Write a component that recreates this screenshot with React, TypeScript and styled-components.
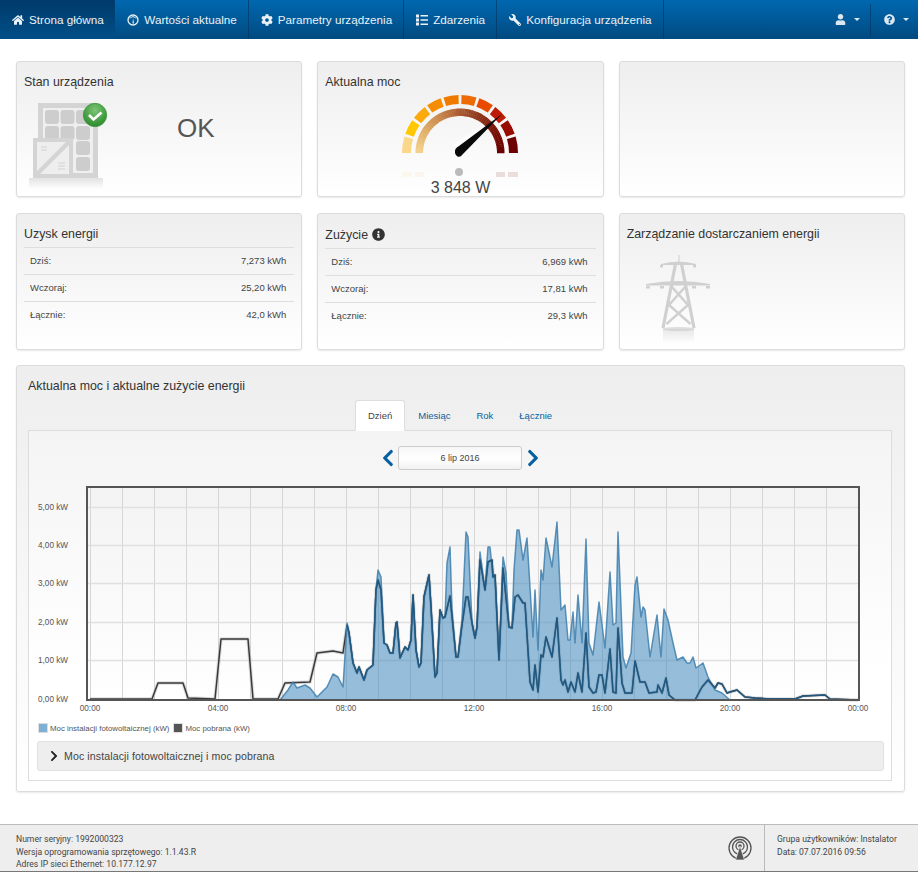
import React from 'react';
import styled, { createGlobalStyle } from 'styled-components';
import { FaHome, FaCog, FaWrench, FaUser, FaQuestionCircle, FaInfoCircle, FaChevronLeft, FaChevronRight } from 'react-icons/fa';

const Global = createGlobalStyle`
  html, body { margin: 0; padding: 0; background: #fff; }
  body { font-family: "Liberation Sans", Arial, sans-serif; color: #333; }
  * { box-sizing: border-box; }
`;
const Page = styled.div`width: 918px; height: 872px; display: flex; flex-direction: column; overflow: hidden;`;
const NavBar = styled.nav`
  height: 39px; display: flex; background: linear-gradient(#0068b0, #004a80);
`;
const NavItem = styled.div<{ $active?: boolean; $plain?: boolean }>`
  display: flex; align-items: center; gap: 5px; padding: ${p => (p.$active ? '0 11.6px 0 12px' : '0 11px 0 12px')}; color: #eaf2f8; font-size: 11.7px;
  background: ${p => (p.$active ? 'linear-gradient(#003a6a, #004f88)' : 'none')};
  border-right: ${p => (p.$active || p.$plain ? '0' : '1px solid rgba(0,45,85,.55)')};
  svg { font-size: 12px; flex: none; }
`;
const FlippedWrench = styled(FaWrench)`transform: scaleX(-1);`;
const NavRight = styled.div`margin-left: auto; display: flex; align-items: center;`;
const NavMenu = styled.div<{ $sep?: boolean }>`
  display: flex; align-items: center; gap: 8px; color: #dbe8f2; height: 32px; font-size: 11px;
  padding: ${p => (p.$sep ? '0 9px 0 13px' : '0 10px 0 0')};
  border-left: ${p => (p.$sep ? '1px solid rgba(0,45,85,.55)' : '0')};
`;
const Caret = styled.span`
  width: 0; height: 0; border-left: 3px solid transparent; border-right: 3px solid transparent; border-top: 3px solid #dbe8f2;
`;
const Main = styled.main`
  flex: 1; padding: 22px 13px 0 16px; display: grid; grid-template-columns: repeat(3, 1fr);
  grid-template-rows: 136px 153px 442px; column-gap: 15px; align-content: start;
`;
const Card = styled.section<{ $mt?: number }>`
  background: linear-gradient(#eeeeee, #ffffff);
  border: 1px solid #dcdcdc; border-radius: 3px; box-shadow: 0 1px 2px rgba(0,0,0,.09);
  margin-top: ${p => p.$mt ?? 0}px; padding: 12px 7px 0;
  overflow: hidden;
`;
const Title = styled.h3<{ $extra?: number }>`
  margin: 0; font-weight: normal; font-size: 12.4px; line-height: 16px; color: #333;
  display: flex; align-items: center; gap: 4px; height: ${p => 16 + (p.$extra ?? 0)}px;
  svg { font-size: 13px; color: #333; }
`;
const StatusBody = styled.div`display: flex; align-items: flex-start; margin-left: -7px;`;
const DeviceSvg = styled.svg`display: block; flex: none; margin-top: 5px;`;
const OkText = styled.div`font-size: 26px; line-height: 30px; color: #555; margin: 23px 0 0 60px;`;
const GaugeWrap = styled.div`display: flex; flex-direction: column; align-items: center;`;
const GaugeSvg = styled.svg`display: block; margin-top: 3px;`;
const GaugeValue = styled.div`font-size: 16px; line-height: 18px; color: #444; margin-top: 1px;`;
const Rows = styled.div<{ $mt: number }>`margin-top: ${p => p.$mt}px;`;
const Row = styled.div`
  height: 27px; border-top: 1px solid #dedede; display: flex; align-items: center; justify-content: space-between;
  padding: 0 8px 2px 6px; font-size: 9.5px; color: #444;
`;
const TowerSvg = styled.svg`display: block; margin: 13px 0 0 19px;`;
const Panel = styled(Card)`grid-column: 1 / span 3; margin-top: 15px; padding: 12px 12px 0 11px;`;
const PanelTitle = styled(Title)`margin-bottom: 6px;`;
const Tabs = styled.div`display: flex; justify-content: center; margin-bottom: -1px; position: relative; height: 31px;`;
const Tab = styled.div<{ $active?: boolean }>`
  padding: 0 12px; line-height: 30px; font-size: 9.5px;
  color: ${p => (p.$active ? '#444' : '#0a5f9c')};
  background: ${p => (p.$active ? '#fff' : 'transparent')};
  border: ${p => (p.$active ? '1px solid #ddd' : '1px solid transparent')};
  border-bottom-color: ${p => (p.$active ? '#fff' : 'transparent')};
  border-radius: 3px 3px 0 0;
`;
const TabBox = styled.div`
  height: 351px; background: linear-gradient(#f4f4f4, #fff 70%); border: 1px solid #dddddd; padding: 15px 7px 0 8px;
`;
const DateRow = styled.div`
  display: flex; justify-content: center; align-items: center; gap: 4px; height: 24px; color: #07609f;
  svg { display: block; width: 12px; height: 20px; }
`;
const DateBox = styled.div`
  width: 124px; height: 24px; margin-right: 1px; border: 1px solid #ccc; border-radius: 3px; background: linear-gradient(#f6f6f6, #fff 50%, #f2f2f2);
  font-size: 9px; line-height: 22px; color: #444; text-align: center;
`;
const ChartSvg = styled.svg`display: block; margin-top: 10px;`;
const Legend = styled.div`height: 14px; display: flex; align-items: center; gap: 2px; font-size: 7.85px; color: #555; padding-left: 1px; margin: 1px 0 6px;`;
const Swatch = styled.i<{ $c: string }>`width: 10px; height: 10px; background: ${p => p.$c}; border: 1px solid #ddd; display: block; margin-left: ${p => (p.$c === '#555' ? '2px' : 0)};`;
const Accordion = styled.div`
  height: 30px; background: #eeeeee; border: 1px solid #e0e0e0; border-radius: 3px; display: flex; align-items: center; gap: 6px; padding-left: 12px;
  font-size: 10.6px; letter-spacing: .1px; color: #444; svg { width: 8px; height: 12px; color: #222; }
`;
const Footer = styled.footer`
  height: 48px; background: #eeeeee; border-top: 1px solid #bbb; border-bottom: 1px solid #777; display: flex;
  font-family: Roboto, Tahoma, sans-serif; font-size: 8.6px; line-height: 12.5px; color: #444;
`;
const FooterLeft = styled.div`flex: 1; padding: 8px 0 0 16px;`;
const FooterIcon = styled.div`display: flex; align-items: center; padding-right: 12px;`;
const FooterRight = styled.div`width: 154px; border-left: 1px solid #bbb; padding: 8px 0 0 12px;`;

const pv: number[][] = [[90,700],[280,700],[288,690],[293,682],[297,688],[305,685],[310,688],[317,697],[327,687],[333,674],[338,677],[343,687],[347,623],[349,633],[353,663],[357,673],[359,667],[364,680],[367,670],[373,665],[376,590],[378,570],[381,577],[384,643],[387,645],[390,653],[393,653],[396,623],[397,622],[400,658],[405,647],[408,650],[411,640],[413,595],[416,650],[419,667],[421,663],[424,597],[429,575],[431,607],[435,677],[437,673],[440,610],[443,618],[445,617],[447,563],[450,547],[452,610],[456,657],[458,657],[462,620],[466,532],[468,537],[472,623],[475,638],[477,627],[480,552],[485,590],[488,547],[490,547],[493,577],[495,575],[499,660],[503,557],[506,573],[509,627],[512,628],[514,570],[517,530],[519,530],[523,560],[527,538],[533,637],[535,590],[538,650],[541,570],[543,580],[546,538],[552,567],[557,522],[561,610],[565,605],[568,640],[570,640],[573,612],[575,643],[578,595],[582,643],[586,539],[589,643],[593,655],[599,602],[605,648],[610,572],[613,625],[616,623],[618,532],[623,657],[626,668],[631,653],[635,585],[637,577],[641,617],[643,607],[645,610],[650,657],[657,615],[661,657],[664,609],[668,620],[673,643],[677,660],[683,657],[687,663],[690,663],[693,657],[696,668],[703,663],[708,677],[715,690],[722,693],[730,700],[858,700]];
const load: number[][] = [[90,699],[152,699],[158,683],[183,683],[188,698],[215,699],[221,639],[248,639],[253,699],[278,699],[285,683],[310,682],[317,653],[333,651],[343,653],[347,625],[349,633],[353,663],[357,673],[359,667],[364,680],[367,670],[373,665],[376,590],[378,580],[381,590],[384,643],[387,645],[390,653],[393,653],[396,623],[397,622],[400,658],[405,647],[408,650],[411,640],[413,595],[416,650],[419,667],[421,663],[424,597],[429,575],[431,607],[435,677],[437,673],[440,610],[443,618],[445,617],[450,596],[456,657],[458,657],[462,625],[466,597],[468,597],[472,623],[475,638],[477,627],[480,560],[485,590],[488,562],[492,560],[493,577],[495,575],[499,660],[503,568],[509,627],[512,628],[515,597],[518,595],[523,603],[525,603],[530,682],[533,690],[535,665],[538,692],[541,655],[543,657],[546,637],[552,657],[557,618],[561,680],[563,685],[565,680],[568,692],[571,682],[575,692],[578,673],[582,692],[586,633],[589,687],[593,693],[596,692],[599,675],[602,675],[605,693],[610,649],[613,692],[616,693],[618,628],[622,683],[625,693],[632,693],[635,661],[640,682],[645,682],[649,693],[657,692],[658,685],[662,693],[666,678],[669,695],[675,700],[695,700],[702,687],[708,680],[715,688],[718,683],[722,684],[727,693],[730,692],[737,690],[745,697],[755,698],[770,699],[795,699],[803,696],[825,695],[830,699],[858,700]];
const toLine = (p: number[][]) => p.map((q, i) => `${i ? 'L' : 'M'}${q[0]} ${q[1]}`).join(' ');

const polar = (r: number, deg: number) => {
  const a = (deg * Math.PI) / 180;
  return [65 - r * Math.cos(a), 60 - r * Math.sin(a)];
};
const arcSeg = (r0: number, r1: number, a0: number, a1: number) => {
  const [x0, y0] = polar(r1, a0); const [x1, y1] = polar(r1, a1); const [x2, y2] = polar(r0, a1); const [x3, y3] = polar(r0, a0);
  return `M${x0} ${y0} A${r1} ${r1} 0 0 1 ${x1} ${y1} L${x2} ${y2} A${r0} ${r0} 0 0 0 ${x3} ${y3} Z`;
};
const outerColors = ['#fbd78a', '#ffc800', '#fca90c', '#f68c00', '#f07a00', '#ee6a04', '#e84a00', '#bd1c06', '#980c00', '#6e0000'];
const innerStops = [[245,210,140],[225,175,105],[200,135,75],[170,90,50],[140,50,25],[120,15,5],[105,0,0]];
const innerColor = (t: number) => {
  const v = t * (innerStops.length - 1); const i = Math.min(Math.floor(v), innerStops.length - 2); const f = v - i;
  const c = innerStops[i].map((s, k) => Math.round(s + (innerStops[i + 1][k] - s) * f));
  return `rgb(${c.join(',')})`;
};

function Gauge() {
  const outer = outerColors.map((c, i) => {
    const a0 = i * 18 + (i ? 1.5 : 0); const a1 = (i + 1) * 18 - (i < 9 ? 1.5 : 0);
    return <path key={i} d={arcSeg(49, 58, a0, a1)} fill={c} />;
  });
  const inner = Array.from({ length: 60 }, (_, i) => (
    <path key={i} d={arcSeg(37, 44.5, i * 3, (i + 1) * 3 + 0.4)} fill={innerColor(i / 59)} />
  ));
  return (
    <GaugeSvg width="130" height="85" viewBox="0 0 130 85">
      <defs>
        <linearGradient id="ndl" x1="0" y1="1" x2="1" y2="0"><stop offset="0" stopColor="#fff" stopOpacity=".9" /><stop offset="1" stopColor="#fff" stopOpacity="0" /></linearGradient>
      </defs>
      {outer}{inner}
      <path d="M58 52 L92 28 L70 60 Z" fill="url(#ndl)" />
      <path d="M60.5 56 Q62 54 64 53 L107 21 L67.500 61.500 Q65.500 64.500 62.500 63.500 Q58.500 61 60.500 56 Z" fill="#0a0a0a" />
      <circle cx="64" cy="79" r="4" fill="#bbb" />
      <g opacity=".12">
        <rect x="7" y="79" width="10" height="5" fill="#fbd78a" /><rect x="20" y="79" width="9" height="5" fill="#f2d08a" />
        <rect x="101" y="79" width="9" height="5" fill="#7a0000" /><rect x="113" y="79" width="10" height="5" fill="#7a0000" />
      </g>
    </GaugeSvg>
  );
}

function DeviceIcon() {
  const g = '#d4d4d4';
  const cells = [[28,15],[43.500,15],[59,15],[28,31],[43.500,31],[59,31],[59,46],[59,62]];
  return (
    <DeviceSvg width="100" height="95" viewBox="0 0 100 95">
      <defs>
        <radialGradient id="chk" cx=".5" cy=".3" r=".7"><stop offset="0" stopColor="#7cc576" /><stop offset="1" stopColor="#2b8a2b" /></radialGradient>
        <linearGradient id="sh" x1="0" y1="0" x2="0" y2="1"><stop offset="0" stopColor="#bbb" stopOpacity=".4" /><stop offset="1" stopColor="#bbb" stopOpacity="0" /></linearGradient>
      </defs>
      <rect x="23.500" y="10.500" width="55" height="70" fill="#efefef" stroke={g} strokeWidth="5" />
      {cells.map(([x, y], i) => <rect key={i} x={x} y={y} width="14" height="14" rx="3" fill="#cdcdcd" />)}
      <rect x="16" y="43" width="40" height="40" fill={g} />
      <rect x="20" y="47" width="32" height="32" fill="#eee" />
      <path d="M20 79 L52 47" stroke={g} strokeWidth="4.500" />
      <path d="M24 52h6M24 55h6M41 71h7M41 74h7M41 68h7" stroke="#d2d2d2" strokeWidth="1" />
      <rect x="12" y="83" width="74" height="11" fill="url(#sh)" />
      <circle cx="78" cy="20" r="11.700" fill="url(#chk)" stroke="#3f9a3f" strokeWidth=".8" />
      <path d="M72 20 l4.500 4.500 l8 -7" fill="none" stroke="#fff" strokeWidth="2.600" />
    </DeviceSvg>
  );
}

function TowerIcon() {
  const g = '#d0d0d0';
  return (
    <TowerSvg width="70" height="90" viewBox="0 0 70 90">
      <defs><linearGradient id="ts" x1="0" y1="0" x2="0" y2="1"><stop offset="0" stopColor="#ccc" stopOpacity=".45" /><stop offset="1" stopColor="#ccc" stopOpacity="0" /></linearGradient></defs>
      <path d="M32.500 0h1v8h-1z" fill={g} />
      <path d="M15 9 Q33 4 50 9 L50 10 L15 10 Z" fill={g} />
      <path d="M0 29 Q33 23 64 29 L64 30.500 L0 30.500 Z" fill={g} />
      <path d="M14 10h3v2.500h-3zM47 10h3v2.500h-3zM0 31h4v2.500h-4zM14 31h4v2.500h-4zM46 31h4v2.500h-4zM60 31h4v2.500h-4z" fill={g} />
      <path d="M29.500 9 L17 73 M35.500 9 L48 73" stroke={g} strokeWidth="3.200" fill="none" />
      <path d="M25 31 L42 50 L20.500 69 M40 31 L23 50 L44.500 69" stroke={g} strokeWidth="2.500" fill="none" />
      <ellipse cx="32.500" cy="74" rx="16" ry="2" fill="#ddd" />
      <rect x="17" y="74" width="31" height="14" fill="url(#ts)" />
    </TowerSvg>
  );
}

function GaugeNavIcon() {
  return (
    <svg width="12" height="12" viewBox="0 0 12 12">
      <circle cx="6" cy="6" r="5" fill="none" stroke="currentColor" strokeWidth="1.300" />
      <path d="M3 4.500a3.400 3.400 0 0 1 6 0" fill="none" stroke="currentColor" />
      <path d="M5.500 9.500 L6 4 L7 9.500 Z" fill="currentColor" />
    </svg>
  );
}

function ListNavIcon() {
  return (
    <svg width="12" height="12" viewBox="0 0 12 12" fill="currentColor">
      <path d="M0 .5h3v3H0zM0 4.500h3v3H0zM0 8.500h3v3H0zM4.500 1h7.500v1.600H4.500zM4.500 5.200h7.500v1.600H4.500zM4.500 9.400h7.500V11H4.500z" />
    </svg>
  );
}

function AntennaIcon() {
  return (
    <svg width="24" height="24" viewBox="0 0 24 24" fill="none" stroke="#555">
      <circle cx="12" cy="12" r="11" strokeWidth="1.300" />
      <circle cx="12" cy="11" r="7.500" strokeWidth="1.300" />
      <circle cx="12" cy="10" r="4" strokeWidth="1.300" />
      <circle cx="12" cy="10" r="1.800" fill="#555" stroke="none" />
      <path d="M12 10 L7.500 24 H16.500 Z" fill="#555" stroke="#eee" strokeWidth=".7" />
    </svg>
  );
}

function Chart() {
  const xs = Array.from({ length: 24 }, (_, i) => 90.500 + i * 32);
  const ys: [number, string][] = [[507,'5,00 kW'],[545,'4,00 kW'],[583,'3,00 kW'],[622,'2,00 kW'],[660,'1,00 kW'],[699,'0,00 kW']];
  const ticks = ['00:00','04:00','08:00','12:00','16:00','20:00','00:00'];
  return (
    <ChartSvg width="847" height="240" viewBox="37 480 847 240">
      <defs>
        <linearGradient id="plot" x1="0" y1="0" x2="0" y2="1"><stop offset="0" stopColor="#f3f3f3" /><stop offset="1" stopColor="#fff" /></linearGradient>
      </defs>
      <rect x="87" y="487" width="772" height="213" fill="url(#plot)" />
      {xs.map((x, i) => <path key={i} d={`M${x} 487V700`} stroke="#d6d6d6" strokeWidth="1" />)}
      {ys.slice(0, 5).map(([y], i) => <path key={i} d={`M87 ${y + .5}H859`} stroke="#e0e0e0" strokeWidth="1.300" />)}
      <path d={toLine(load)} fill="none" stroke="#aaa" strokeOpacity=".4" strokeWidth="3.500" strokeLinejoin="round" />
      <path d={toLine(load)} fill="none" stroke="#3a3a3a" strokeWidth="1.500" strokeLinejoin="round" />
      <path d={`${toLine(pv)} Z`} fill="#4a8fc0" fillOpacity=".58" />
      <path d={toLine(pv)} fill="none" stroke="#3f7fad" strokeOpacity=".85" strokeWidth="1.500" strokeLinejoin="round" />
      <path d={toLine(load.filter(p => p[0] >= 347))} fill="none" stroke="#215880" strokeWidth="1.500" strokeLinejoin="round" />
      <rect x="87" y="487" width="772" height="213" fill="none" stroke="#555" strokeWidth="2" />
      {ys.map(([y, t]) => <text key={t} x="38" y={y + 3} fontSize="8.200" fill="#555" fontFamily="Liberation Sans, sans-serif">{t}</text>)}
      {ticks.map((t, i) => <text key={i} x={90 + i * 128} y="711" fontSize="8.200" fill="#555" textAnchor="middle" fontFamily="Liberation Sans, sans-serif">{t}</text>)}
    </ChartSvg>
  );
}

export default function App() {
  return (
    <Page>
      <Global />
      <NavBar>
        <NavItem $active $plain><FaHome />Strona główna</NavItem>
        <NavItem><GaugeNavIcon />Wartości aktualne</NavItem>
        <NavItem><FaCog />Parametry urządzenia</NavItem>
        <NavItem><ListNavIcon />Zdarzenia</NavItem>
        <NavItem><FlippedWrench />Konfiguracja urządzenia</NavItem>
        <NavRight>
          <NavMenu><FaUser /><Caret /></NavMenu>
          <NavMenu $sep><FaQuestionCircle /><Caret /></NavMenu>
        </NavRight>
      </NavBar>
      <Main>
        <Card>
          <Title>Stan urządzenia</Title>
          <StatusBody><DeviceIcon /><OkText>OK</OkText></StatusBody>
        </Card>
        <Card>
          <Title>Aktualna moc</Title>
          <GaugeWrap><Gauge /><GaugeValue>3 848 W</GaugeValue></GaugeWrap>
        </Card>
        <Card />
        <Card $mt={16}>
          <Title>Uzysk energii</Title>
          <Rows $mt={5}>
            <Row><span>Dziś:</span><span>7,273 kWh</span></Row>
            <Row><span>Wczoraj:</span><span>25,20 kWh</span></Row>
            <Row><span>Łącznie:</span><span>42,0 kWh</span></Row>
          </Rows>
        </Card>
        <Card $mt={16}>
          <Title $extra={1}>Zużycie <FaInfoCircle /></Title>
          <Rows $mt={5}>
            <Row><span>Dziś:</span><span>6,969 kWh</span></Row>
            <Row><span>Wczoraj:</span><span>17,81 kWh</span></Row>
            <Row><span>Łącznie:</span><span>29,3 kWh</span></Row>
          </Rows>
        </Card>
        <Card $mt={16}>
          <Title>Zarządzanie dostarczaniem energii</Title>
          <TowerIcon />
        </Card>
        <Panel>
          <PanelTitle>Aktualna moc i aktualne zużycie energii</PanelTitle>
          <Tabs>
            <Tab $active>Dzień</Tab>
            <Tab>Miesiąc</Tab>
            <Tab>Rok</Tab>
            <Tab>Łącznie</Tab>
          </Tabs>
          <TabBox>
            <DateRow><FaChevronLeft /><DateBox>6 lip 2016</DateBox><FaChevronRight /></DateRow>
            <Chart />
            <Legend>
              <Swatch $c="#7fb0d4" />Moc instalacji fotowoltaicznej (kW)
              <Swatch $c="#555" />Moc pobrana (kW)
            </Legend>
            <Accordion><FaChevronRight />Moc instalacji fotowoltaicznej i moc pobrana</Accordion>
          </TabBox>
        </Panel>
      </Main>
      <Footer>
        <FooterLeft>
          <div>Numer seryjny: 1992000323</div>
          <div>Wersja oprogramowania sprzętowego: 1.1.43.R</div>
          <div>Adres IP sieci Ethernet: 10.177.12.97</div>
        </FooterLeft>
        <FooterIcon><AntennaIcon /></FooterIcon>
        <FooterRight>
          <div>Grupa użytkowników: Instalator</div>
          <div>Data: 07.07.2016 09:56</div>
        </FooterRight>
      </Footer>
    </Page>
  );
}
